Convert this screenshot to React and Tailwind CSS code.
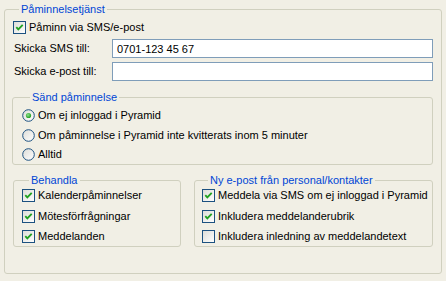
import React from 'react';

const font = { fontFamily: '"Liberation Sans", Arial, sans-serif' };

const CheckBox = ({ checked }) => (
  <svg width="13" height="13" viewBox="0 0 13 13" className="shrink-0">
    <defs>
      <linearGradient id="cbg" x1="0" y1="0" x2="1" y2="1">
        <stop offset="0" stopColor="#dcdcd7" />
        <stop offset="1" stopColor="#ffffff" />
      </linearGradient>
    </defs>
    <rect x="0.5" y="0.5" width="12" height="12" fill="url(#cbg)" stroke="#1c5180" />
    {checked && (
      <polyline
        points="3.3,6.2 5.3,8.3 9.7,3.9"
        fill="none"
        stroke="#21a121"
        strokeWidth="1.9"
      />
    )}
  </svg>
);

const Radio = ({ checked }) => (
  <svg width="13" height="13" viewBox="0 0 13 13" className="shrink-0">
    <defs>
      <linearGradient id="rbg" x1="0" y1="0" x2="1" y2="1">
        <stop offset="0" stopColor="#dcdcd7" />
        <stop offset="1" stopColor="#ffffff" />
      </linearGradient>
      <radialGradient id="rdot" cx="0.4" cy="0.4" r="0.6">
        <stop offset="0" stopColor="#8ee08e" />
        <stop offset="1" stopColor="#21a121" />
      </radialGradient>
    </defs>
    <circle cx="6.5" cy="6.5" r="5.8" fill="url(#rbg)" stroke="#1c5180" strokeWidth="1" />
    {checked && <circle cx="6.5" cy="6.5" r="2.6" fill="url(#rdot)" />}
  </svg>
);

const Legend = ({ children, className = '' }) => (
  <legend className={`px-[2px] leading-[13px] text-[#0046d5] ${className}`}>{children}</legend>
);

const CheckRow = ({ checked, label }) => (
  <label className="flex h-[13px] items-center gap-[3px] leading-[13px] whitespace-nowrap">
    <CheckBox checked={checked} />
    <span>{label}</span>
  </label>
);

const RadioRow = ({ checked, label }) => (
  <label className="flex h-[13px] items-center gap-[3px] leading-[13px] whitespace-nowrap">
    <Radio checked={checked} />
    <span>{label}</span>
  </label>
);

export default function App() {
  return (
    <div className="w-[446px] h-[281px] bg-[#f1efe5] pt-[3px] pl-[4px] text-[11px] text-black" style={font}>
      <fieldset className="w-[438px] h-[271px] rounded-[3px] border border-[#d0d0bf] pl-[7px] pr-[8px]">
        <Legend className="ml-[7px]">Påminnelsetjänst</Legend>

        <div className="mt-[5px] ml-[1px]">
          <CheckRow checked label="Påminn via SMS/e-post" />
        </div>

        <div className="mt-[5px] flex items-center">
          <span className="ml-[2px]">Skicka SMS till:</span>
          <input
            defaultValue="0701-123 45 67"
            className="ml-auto h-[19px] w-[321px] border border-[#7f9db9] bg-white px-[4px] text-[11px] leading-[17px] outline-none"
            style={font}
          />
        </div>

        <div className="mt-[4px] flex items-center">
          <span className="ml-[2px]">Skicka e-post till:</span>
          <input
            className="ml-auto h-[19px] w-[321px] border border-[#7f9db9] bg-white px-[4px] text-[11px] leading-[17px] outline-none"
            style={font}
          />
        </div>

        <fieldset className="mt-[10px] rounded-[3px] border border-[#d0d0bf] pl-[9px] pb-[3px]">
          <Legend className="ml-[8px]">Sänd påminnelse</Legend>
          <div className="flex flex-col gap-[6.5px] pt-[5px]">
            <RadioRow checked label="Om ej inloggad i Pyramid" />
            <RadioRow label="Om påminnelse i Pyramid inte kvitterats inom 5 minuter" />
            <RadioRow label="Alltid" />
          </div>
        </fieldset>

        <div className="mt-[9px] flex gap-[13px]">
          <fieldset className="ml-[1px] w-[168px] rounded-[3px] border border-[#d0d0bf] pl-[8px] pb-[3px]">
            <Legend className="ml-[7px]">Behandla</Legend>
            <div className="flex flex-col gap-[7.5px] pt-[2px]">
              <CheckRow checked label="Kalenderpåminnelser" />
              <CheckRow checked label="Mötesförfrågningar" />
              <CheckRow checked label="Meddelanden" />
            </div>
          </fieldset>

          <fieldset className="flex-1 rounded-[3px] border border-[#d0d0bf] pl-[7px] pb-[3px]">
            <Legend className="ml-[6px]">Ny e-post från personal/kontakter</Legend>
            <div className="flex flex-col gap-[7.5px] pt-[2px]">
              <CheckRow checked label="Meddela via SMS om ej inloggad i Pyramid" />
              <CheckRow checked label="Inkludera meddelanderubrik" />
              <CheckRow label="Inkludera inledning av meddelandetext" />
            </div>
          </fieldset>
        </div>
      </fieldset>
    </div>
  );
}
